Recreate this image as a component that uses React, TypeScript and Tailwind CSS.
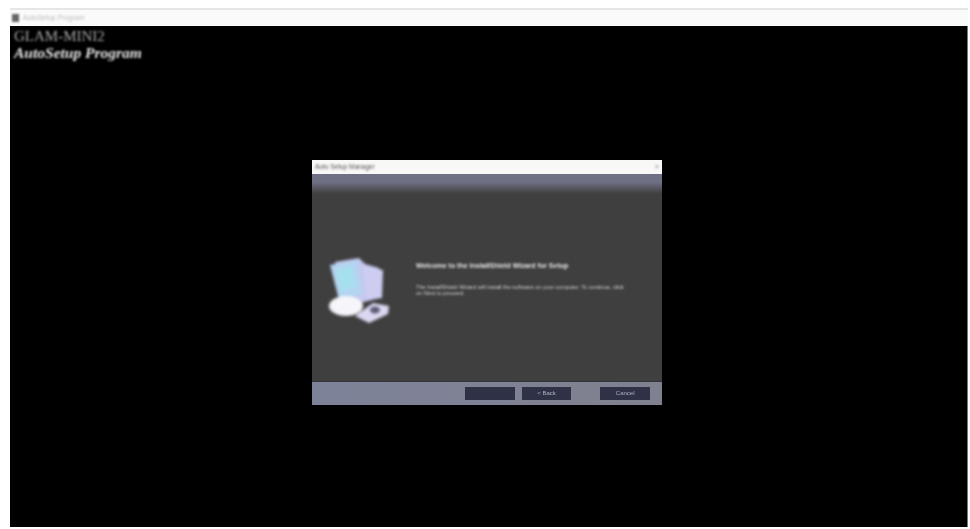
const SERIF = { fontFamily: '"Liberation Serif", serif' }

const ComputerIcon = () => (
  <svg width="64" height="70" viewBox="0 0 64 70" className="blur-[1.5px]">
    <path d="M8 6 L32 2 L38 8 L52 12 L52 42 L30 48 L14 44 Z" fill="#c6c8ee" />
    <path d="M3 9 L30 4 L36 38 L12 44 Z" fill="#b4d4f0" />
    <path d="M9 14 L25 10 L29 30 L14 36 Z" fill="#a6e0ee" />
    <path d="M36 10 L56 14 L55 42 L40 44 Z" fill="#cdcdf2" />
    <ellipse cx="19" cy="50" rx="17" ry="10" fill="#f6f6fa" />
    <path d="M28 60 L46 47 L62 50 L61 58 L42 67 Z" fill="#dcd8f2" />
    <ellipse cx="48" cy="54" rx="5" ry="3.5" fill="#5c5c74" />
  </svg>
)

const DialogButton = ({ label, className }: { label: string; className: string }) => (
  <div className={`flex h-[13px] w-[50px] items-center justify-center bg-[#2f3246] text-[6px] text-[#aeb0bf] blur-[0.5px] ${className}`}>
    <span className="blur-[0.6px]">{label}</span>
  </div>
)

export default function App() {
  return (
    <div className="flex h-[529px] w-[970px] flex-col overflow-hidden bg-white pt-[8px] pr-[2px] pb-[2px] pl-[10px]">
      {/* window title */}
      <div className="flex h-[18px] shrink-0 items-center gap-1 border-t-2 border-[#e6e6e6] bg-[#fafafa] pl-[2px]">
        <div className="h-[8px] w-[7px] bg-[#666] blur-[1px]" />
        <span className="text-[7px] text-[#bbb] blur-[1px]" style={{ fontFamily: '"Liberation Sans", sans-serif' }}>
          AutoSetup Program
        </span>
      </div>

      {/* fullscreen black area */}
      <div className="relative flex-1 border-r border-[#777] bg-black">
        <div className="flex flex-col px-[4px] pt-[3px] blur-[1px]" style={SERIF}>
          <span className="text-[15px] leading-[15px] text-[#a4a4a4]">GLAM-MINI2</span>
          <span className="text-[15.5px] leading-[17px] font-bold text-[#e4e4e4] italic">AutoSetup Program</span>
        </div>

        {/* setup dialog */}
        <div className="absolute top-[134px] left-[302px] flex h-[245px] w-[350px] flex-col bg-[#3f3f3f]" style={{ fontFamily: '"Liberation Sans", sans-serif' }}>
          <div className="flex h-[14px] shrink-0 items-center justify-between bg-[#f8f9f6] px-[3px]">
            <span className="text-[6.5px] text-[#555] blur-[0.8px]">Auto Setup Manager</span>
            <span className="text-[7px] text-[#888] blur-[0.8px]">×</span>
          </div>
          <div className="h-[20px] shrink-0 bg-gradient-to-b from-[#6f7084] from-40% to-[#3f3f3f]" />

          <div className="flex flex-1 pt-[62px] pl-[15px]">
            <div className="w-[89px] shrink-0">
              <ComputerIcon />
            </div>
            <div className="mt-[6px] flex w-[212px] flex-col gap-[14px] text-[7px] font-bold text-[#e4e4e4] blur-[0.8px]">
              <p className="leading-[8px] whitespace-nowrap">Welcome to the InstallShield Wizard for Setup</p>
              <p className="text-[5.6px] leading-[6px] font-normal text-[#d0d0d0]">
                The InstallShield Wizard will install the software on your computer. To continue, click on Next to proceed.
              </p>
            </div>
          </div>

          <div className="flex h-[24px] shrink-0 items-center gap-[7px] border-t border-[#33343c] bg-gradient-to-r from-[#7d8299] to-[#80818f] pr-[12px] pl-[153px]">
            <DialogButton label="" className="" />
            <DialogButton label="< Back" className="" />
            <DialogButton label="Cancel" className="ml-[22px]" />
          </div>
        </div>
      </div>
    </div>
  )
}
